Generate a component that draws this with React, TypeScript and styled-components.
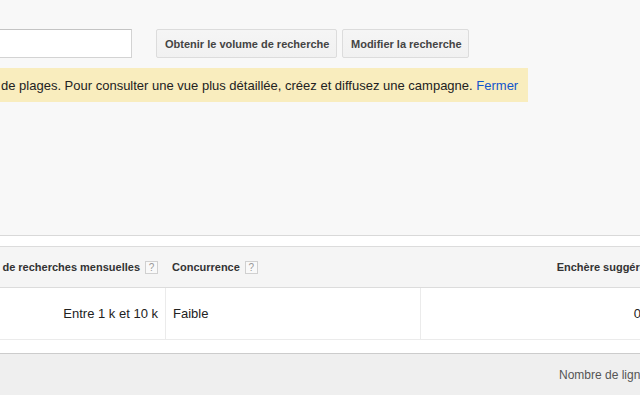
import React from "react";
import styled, { createGlobalStyle } from "styled-components";

const GlobalStyle = createGlobalStyle`
  html, body {
    margin: 0;
    padding: 0;
    background: #fff;
  }
  body {
    font-family: "Liberation Sans", Arial, sans-serif;
  }
`;

const Viewport = styled.div`
  width: 640px;
  height: 405px;
  overflow: hidden;
  background: #fff;
`;

const TopArea = styled.div`
  height: 235px;
  background: #f8f8f8;
  border-bottom: 1px solid #d9d9d9;
`;

const Toolbar = styled.div`
  display: flex;
  align-items: center;
  margin-left: -40px;
  padding-top: 29px;
`;

const SearchInput = styled.div`
  box-sizing: border-box;
  width: 172px;
  height: 29px;
  background: #fff;
  border: 1px solid #d3d3d3;
  border-top-color: #c4c4c4;
  margin-right: 24px;
`;

const Button = styled.button<{ $w: number }>`
  box-sizing: border-box;
  width: ${({ $w }) => $w}px;
  height: 29px;
  margin-right: 5px;
  padding: 0 8px;
  background: linear-gradient(#f5f5f5, #f1f1f1);
  border: 1px solid #dcdcdc;
  border-radius: 2px;
  color: #444;
  font-family: "Liberation Sans", Arial, sans-serif;
  font-size: 11px;
  font-weight: 700;
  white-space: nowrap;
  text-align: left;
`;

const Banner = styled.div`
  display: inline-flex;
  align-items: center;
  box-sizing: border-box;
  height: 34px;
  margin-top: 10px;
  margin-left: -10px;
  padding: 0 10px 0 11px;
  background: #f9edbe;
  color: #222;
  font-size: 13px;
  white-space: nowrap;
`;

const Link = styled.a`
  color: #15c;
  text-decoration: none;
  cursor: pointer;
`;

const Gap = styled.div<{ $h: number }>`
  height: ${({ $h }) => $h}px;
`;

const Table = styled.div`
  display: grid;
  grid-template-columns: 420px 255px 257px;
  margin-left: -255px;
  border-top: 1px solid #dcdcdc;
`;

const HeadCell = styled.div<{ $align?: "left" | "right" }>`
  display: flex;
  align-items: center;
  justify-content: ${({ $align }) => ($align === "right" ? "flex-end" : "flex-start")};
  gap: 5px;
  height: 40px;
  padding: 0 7px;
  background: #f5f5f5;
  border-bottom: 1px solid #dcdcdc;
  color: #333;
  font-size: 11px;
  font-weight: 700;
  white-space: nowrap;
`;

const Help = styled.span`
  display: inline-flex;
  align-items: center;
  justify-content: center;
  box-sizing: border-box;
  width: 13px;
  height: 13px;
  border: 1px solid #d0d0d0;
  background: #f9f9f9;
  color: #999;
  font-size: 10px;
  font-weight: 400;
`;

const Cell = styled.div<{ $align?: "left" | "right"; $divider?: boolean }>`
  display: flex;
  align-items: center;
  justify-content: ${({ $align }) => ($align === "right" ? "flex-end" : "flex-start")};
  height: 51px;
  padding: 0 7px;
  border-bottom: 1px solid #ebebeb;
  border-left: ${({ $divider }) => ($divider ? "1px solid #ebebeb" : "none")};
  color: #222;
  font-size: 13px;
  white-space: nowrap;
`;

const Footer = styled.div`
  display: flex;
  align-items: center;
  height: 41px;
  padding-left: 559px;
  background: #efefef;
  border-top: 1px solid #cccccc;
  color: #555;
  font-size: 12px;
  white-space: nowrap;
`;

export default function App() {
  return (
    <Viewport>
      <GlobalStyle />
      <TopArea>
        <Toolbar>
          <SearchInput />
          <Button $w={181}>Obtenir le volume de recherche</Button>
          <Button $w={127}>Modifier la recherche</Button>
        </Toolbar>
        <Banner>
          de plages. Pour consulter une vue plus détaillée, créez et diffusez une campagne.&nbsp;
          <Link>Fermer</Link>
        </Banner>
      </TopArea>
      <Gap $h={10} />
      <Table>
        <HeadCell $align="right">
          Moy. de recherches mensuelles <Help>?</Help>
        </HeadCell>
        <HeadCell>
          Concurrence <Help>?</Help>
        </HeadCell>
        <HeadCell $align="right">
          Enchère suggérée <Help>?</Help>
        </HeadCell>
        <Cell $align="right">Entre 1 k et 10 k</Cell>
        <Cell $divider>Faible</Cell>
        <Cell $align="right" $divider>0,52 €</Cell>
      </Table>
      <Gap $h={13} />
      <Footer>Nombre de lignes à afficher :</Footer>
    </Viewport>
  );
}
